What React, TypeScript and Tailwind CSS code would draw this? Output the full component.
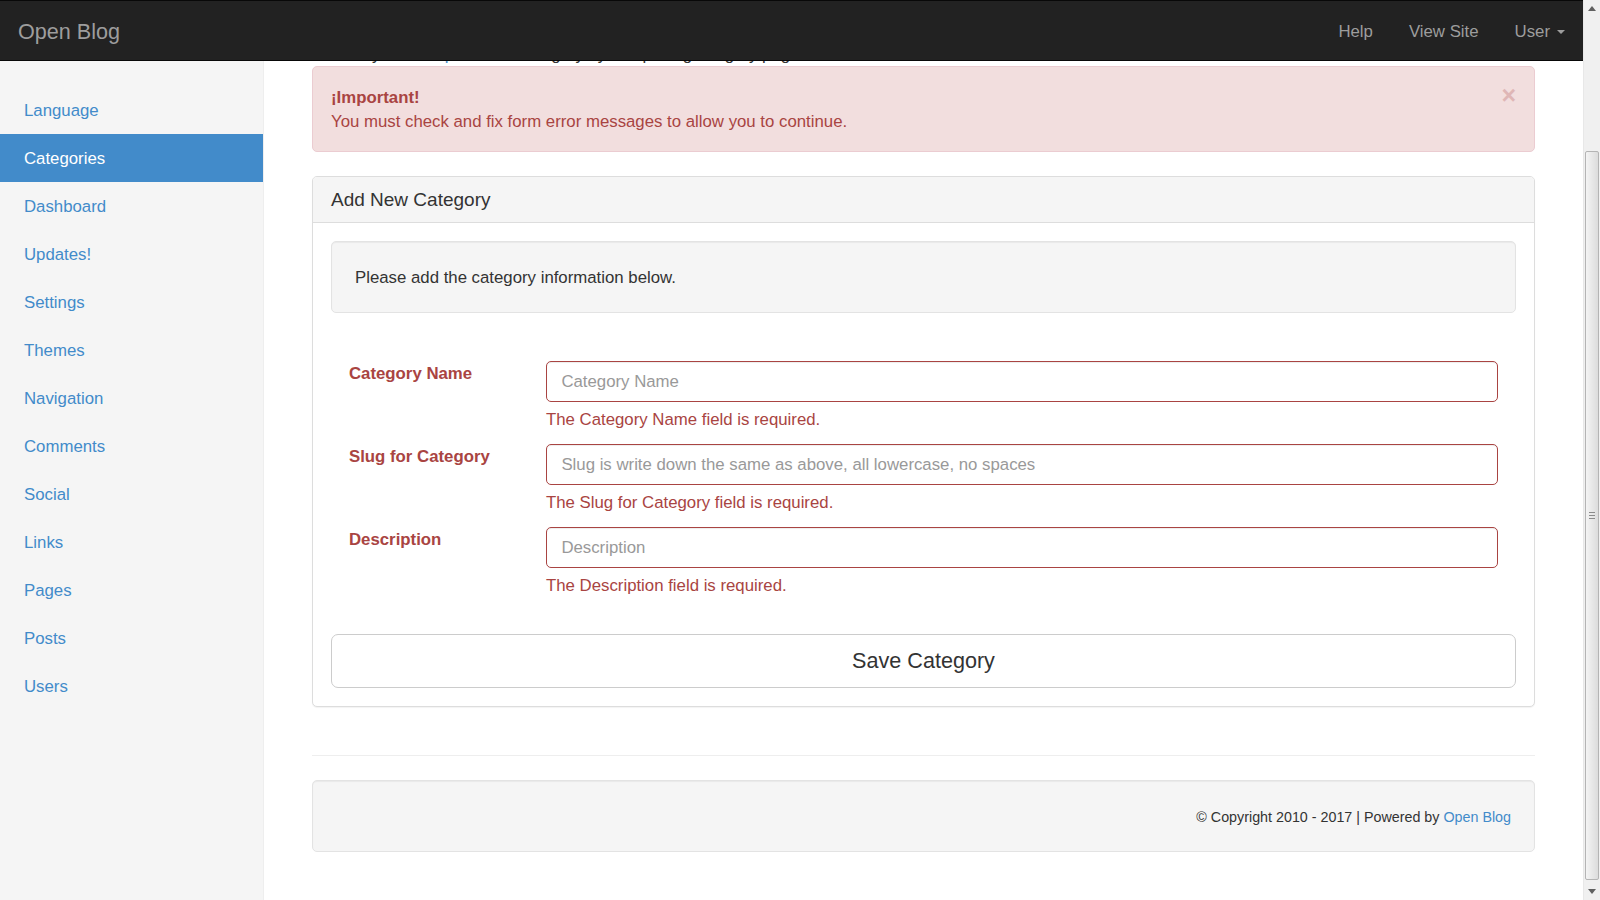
import React from "react";

const sideItems = [
  "Language",
  "Categories",
  "Dashboard",
  "Updates!",
  "Settings",
  "Themes",
  "Navigation",
  "Comments",
  "Social",
  "Links",
  "Pages",
  "Posts",
  "Users",
];

function Field({ label, placeholder, error }: { label: string; placeholder: string; error: string }) {
  return (
    <div className="flex">
      <div className="w-[197px] shrink-0 pl-[18px] pr-[18px] pt-[1px]">
        <label className="block text-[16.8px] leading-[24px] font-bold text-[#a94442]">{label}</label>
      </div>
      <div className="flex-1 px-[18px]">
        <div className="h-[41px] rounded-[5px] border border-[#a94442] bg-white px-[14.4px] flex items-center shadow-[inset_0_1px_1px_rgba(0,0,0,0.075)]">
          <span className="text-[16.8px] text-[#999]">{placeholder}</span>
        </div>
        <div className="mt-[6px] mb-[12px] text-[16.8px] leading-[24px] text-[#a94442]">{error}</div>
      </div>
    </div>
  );
}

function Scrollbar() {
  return (
    <div className="w-[17px] shrink-0 h-full bg-[#f0f0f0] flex flex-col border-l border-[#e8e8e8]">
      <div className="h-[17px] flex items-center justify-center">
        <svg width="8" height="5" viewBox="0 0 8 5"><path d="M0 5 L4 0 L8 5 Z" fill="#606060" /></svg>
      </div>
      <div className="h-[134px]" />
      <div className="h-[729px] mx-[1px] rounded-[2px] border border-[#b4b4b4] bg-gradient-to-r from-[#f4f4f4] to-[#dcdcdc] flex items-center justify-center">
        <div className="flex flex-col gap-[2px]">
          <div className="w-[6px] h-px bg-[#8a8a8a]" />
          <div className="w-[6px] h-px bg-[#8a8a8a]" />
          <div className="w-[6px] h-px bg-[#8a8a8a]" />
        </div>
      </div>
      <div className="flex-1" />
      <div className="h-[17px] flex items-center justify-center">
        <svg width="8" height="5" viewBox="0 0 8 5"><path d="M0 0 L8 0 L4 5 Z" fill="#606060" /></svg>
      </div>
    </div>
  );
}

export default function App() {
  return (
    <div
      className="flex h-screen w-full overflow-hidden bg-white text-[#333]"
      style={{ fontFamily: '"Liberation Sans", Arial, Helvetica, sans-serif' }}
    >
      <div className="flex-1 min-w-0 flex flex-col">
        {/* Navbar */}
        <nav className="h-[61px] shrink-0 bg-[#222] border-t border-[#080808] border-b border-b-[#080808] flex items-center justify-between">
          <div className="pl-[18px] pt-[2px] text-[21.6px] leading-[24px] text-[#9d9d9d]">Open Blog</div>
          <div className="flex items-center pt-[2px] text-[16.8px] leading-[24px] text-[#9d9d9d]">
            <span className="px-[18px]">Help</span>
            <span className="px-[18px]">View Site</span>
            <span className="pl-[18px] pr-[18px] flex items-center">
              User
              <span className="ml-[7px] inline-block w-0 h-0 border-l-[4px] border-r-[4px] border-t-[4px] border-l-transparent border-r-transparent border-t-[#9d9d9d]" />
            </span>
          </div>
        </nav>

        <div className="flex flex-1 min-h-0">
          {/* Sidebar */}
          <aside className="w-[264px] shrink-0 bg-[#f5f5f5] border-r border-[#eee] pt-[25px]">
            <ul>
              {sideItems.map((item) => (
                <li key={item}>
                  <div
                    className={
                      item === "Categories"
                        ? "h-[48px] flex items-center pl-[24px] pt-[1px] text-[16.8px] bg-[#428bca] text-white"
                        : "h-[48px] flex items-center pl-[24px] pt-[1px] text-[16.8px] text-[#428bca]"
                    }
                  >
                    {item}
                  </div>
                </li>
              ))}
            </ul>
          </aside>

          {/* Main */}
          <main className="flex-1 min-w-0 px-[48px]">
            <div className="h-[5px] overflow-hidden text-[16.8px] leading-[24px] text-[#333]">
              <div className="-mt-[18px] pl-[19px] whitespace-nowrap">
                Here you can <span className="text-[#428bca]">update</span> the category by completing the gray page text
              </div>
            </div>

            {/* Alert */}
            <div className="relative rounded-[5px] border border-[#ebccd1] bg-[#f2dede] text-[#a94442] pl-[18px] pr-[42px] pt-[19px] pb-[17px] text-[16.8px] leading-[24px]">
              <div className="font-bold">¡Important!</div>
              <div>You must check and fix form error messages to allow you to continue.</div>
              <span className="absolute right-[18px] top-[16px] text-[25px] leading-[25px] font-bold text-[#a94442] opacity-25">×</span>
            </div>

            {/* Panel */}
            <div className="mt-[24px] rounded-[5px] border border-[#ddd] bg-white shadow-[0_1px_1px_rgba(0,0,0,0.05)]">
              <div className="h-[46px] rounded-t-[4px] bg-[#f5f5f5] border-b border-[#ddd] px-[18px] flex items-center">
                <span className="text-[19px] leading-[21px] text-[#333]">Add New Category</span>
              </div>
              <div className="p-[18px]">
                <div className="rounded-[5px] border border-[#e3e3e3] bg-[#f5f5f5] px-[23px] pt-[24px] pb-[22px] shadow-[inset_0_1px_1px_rgba(0,0,0,0.05)]">
                  <p className="text-[16.8px] leading-[24px]">Please add the category information below.</p>
                </div>

                <div className="mt-[48px]">
                  <Field label="Category Name" placeholder="Category Name" error="The Category Name field is required." />
                  <Field
                    label="Slug for Category"
                    placeholder="Slug is write down the same as above, all lowercase, no spaces"
                    error="The Slug for Category field is required."
                  />
                  <Field label="Description" placeholder="Description" error="The Description field is required." />
                </div>

                <div className="mt-[24px] h-[54px] rounded-[7px] border border-[#ccc] bg-white flex items-center justify-center">
                  <span className="text-[21.6px] text-[#333]">Save Category</span>
                </div>
              </div>
            </div>

            <div className="mt-[48px] border-t border-[#eee]" />

            {/* Footer */}
            <div className="mt-[24px] h-[72px] rounded-[5px] border border-[#e3e3e3] bg-[#f5f5f5] px-[23px] pt-[4px] flex items-center justify-end shadow-[inset_0_1px_1px_rgba(0,0,0,0.05)]">
              <span className="text-[14.3px] text-[#333]">
                © Copyright 2010 - 2017 | Powered by <span className="text-[#428bca]">Open Blog</span>
              </span>
            </div>
          </main>
        </div>
      </div>
      <Scrollbar />
    </div>
  );
}
